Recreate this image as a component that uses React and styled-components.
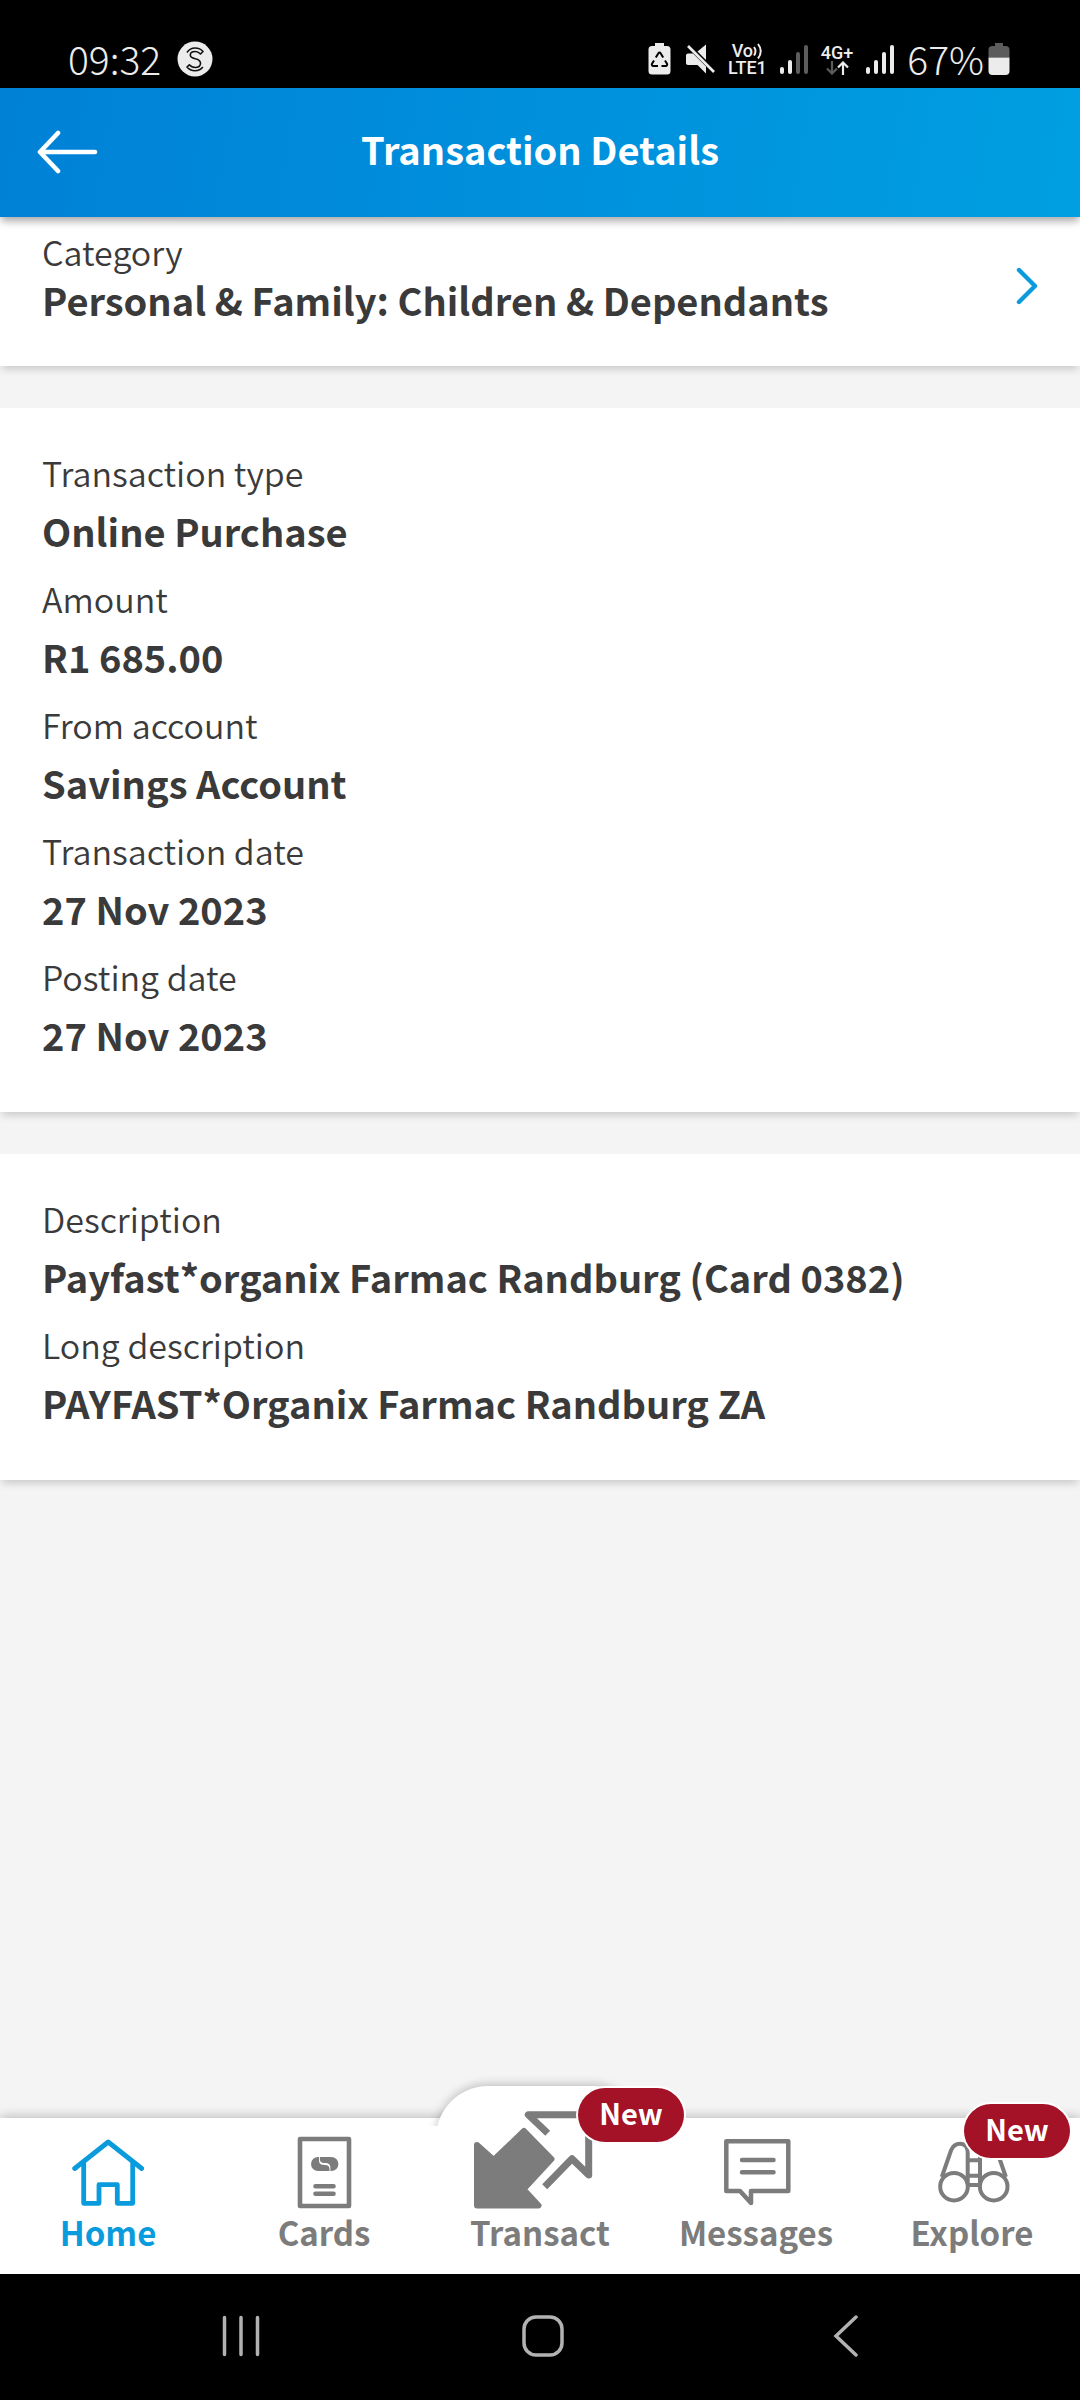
import * as React from "react";
// Components
import styled, { createGlobalStyle, css } from "styled-components";

const colors = {
    blue: "#0a9bdc",
    grey: "#7c7c7c",
    text: "#3a3a3a",
    page: "#f4f4f4",
    badge: "#a31227",
    status: "#ececec",
};

const transaction = [
    { label: "Transaction type", value: "Online Purchase" },
    { label: "Amount", value: "R1 685.00" },
    { label: "From account", value: "Savings Account" },
    { label: "Transaction date", value: "27 Nov 2023" },
    { label: "Posting date", value: "27 Nov 2023" },
];

const description = [
    { label: "Description", value: "Payfast*organix Farmac Randburg (Card 0382)" },
    { label: "Long description", value: "PAYFAST*Organix Farmac Randburg ZA" },
];

// Status bar icons
const AppBadgeIcon = () => (
    <svg width="36" height="36" viewBox="0 0 36 36" fill="none" aria-hidden="true">
        <circle cx="18" cy="18" r="17.5" fill={colors.status} />
        <g stroke="#111" strokeWidth="1.6" strokeLinejoin="round">
            <path d="M10 11.5C12 8.5 15 7 18 7c3 0 6 1 8 3.500l-2.500 2.500C22 11.400 20.300 10.500 18.200 10.500c-3 0-4.900 1.500-4.900 3.500 0 2.200 1.800 3 4.900 3.700 3.200.700 5.300 1.900 5.300 4.600 0 2.700-2.300 4.200-5.300 4.200-2.600 0-4.400-.900-5.900-2.700L10 26c2 2.500 4.700 3.700 8 3.700 3.200 0 6-1.200 7.800-3.700" />
        </g>
    </svg>
);

const SaverIcon = () => (
    <svg width="24" height="34" viewBox="0 0 24 34" fill="none" aria-hidden="true">
        <path d="M7 1h9v3h3a3.500 3.500 0 0 1 3.500 3.500v21.500a3.500 3.500 0 0 1-3.500 3.500H4A3.500 3.500 0 0 1 .5 29V7.500A3.500 3.500 0 0 1 4 4h3z" fill={colors.status} />
        <g stroke="#000" strokeWidth="2" strokeLinejoin="round">
            <path d="M7.800 15.500l2.600-4.300c.6-.9 1.700-.9 2.200 0l2.600 4.300" />
            <path d="M17 18.500l2 3.300c.5 1-.1 2.200-1.300 2.200H13.500" />
            <path d="M10 24H5.300c-1.200 0-1.800-1.200-1.300-2.200l2-3.300" />
        </g>
    </svg>
);

const MuteIcon = () => (
    <svg width="32" height="32" viewBox="0 0 32 32" aria-hidden="true">
        <path d="M22 1.500v15.500l-8.500-8.500z" fill={colors.status} />
        <path d="M2 12.500c0-1 .8-2 2-2h5L22 23.500V30.500L13.500 22H4c-1.200 0-2-.9-2-2z" fill={colors.status} />
        <path d="M4 3l26 26" stroke={colors.status} strokeWidth="2.600" />
    </svg>
);

const WavesIcon = () => (
    <svg width="10" height="16" viewBox="0 0 10 16" fill="none" stroke={colors.status} strokeWidth="2" aria-hidden="true">
        <path d="M1 4q3 4 0 8.500" />
        <path d="M5 1q5.500 7 0 14.500" />
    </svg>
);

const ArrowsIcon = () => (
    <svg width="24" height="14" viewBox="0 0 24 14" fill="none" strokeWidth="2.200" aria-hidden="true">
        <path d="M7 0v12M2 7.500l5 5 5-5" stroke="#5c5c5c" />
        <path d="M18 14V2M13 6.500l5-5 5 5" stroke={colors.status} />
    </svg>
);

const SignalIcon = ({ level }) => (
    <svg width="30" height="32" viewBox="0 0 30 32" strokeWidth="4" strokeLinecap="round" aria-hidden="true">
        {[26, 19, 11, 4].map((top, i) => (
            <path key={top} d={`M${3 + i * 8} ${top}V29`} stroke={i < level ? colors.status : "#5c5c5c"} />
        ))}
    </svg>
);

const BatteryIcon = () => (
    <svg width="22" height="34" viewBox="0 0 22 34" aria-hidden="true">
        <path d="M7 1h8v3h2.500a4 4 0 0 1 4 4v7.500H.5V8a4 4 0 0 1 4-4H7z" fill="#5c5c5c" />
        <path d="M.5 15.500h21V29a4 4 0 0 1-4 4h-13a4 4 0 0 1-4-4z" fill={colors.status} />
    </svg>
);

// Page icons
const BackIcon = () => (
    <svg width="62" height="44" viewBox="0 0 62 44" fill="none" stroke="#fff" strokeWidth="4.600" strokeLinecap="round" strokeLinejoin="round" aria-hidden="true">
        <path d="M59 22H4M22 3L4 22l18 19" />
    </svg>
);

const ChevronIcon = () => (
    <svg width="22" height="38" viewBox="0 0 22 38" fill="none" stroke={colors.blue} strokeWidth="4.400" strokeLinecap="round" strokeLinejoin="round" aria-hidden="true">
        <path d="M3 3l16 16L3 35" />
    </svg>
);

// Tab icons
const HomeIcon = () => (
    <svg width="72" height="76" viewBox="0 0 72 76" fill="none" stroke="currentColor" strokeWidth="4.800" strokeLinecap="round" strokeLinejoin="round" aria-hidden="true">
        <path d="M2.700 34.500L36.200 8l33.500 26.500" />
        <path d="M11.700 28v41.300H27V50.700h18.300v18.600h15.400V28" />
    </svg>
);

const CardsIcon = () => {
    const half = "M30 23a7 7 0 0 0 0 14h11.500v-2c0-3-1.500-3.800-5-4-4-.2-5.500-1.500-5.500-5v-3z";
    return (
        <svg width="72" height="76" viewBox="0 0 72 76" fill="none" stroke="currentColor" strokeWidth="4.600" strokeLinecap="round" strokeLinejoin="round" aria-hidden="true">
            <path d="M12 5h49v67H12z" />
            <path d="M27.500 52.300h18M27.500 59.700h18" />
            <g fill="currentColor" stroke="none">
                <path d={half} />
                <path d={half} transform="rotate(180 36.700 30)" />
            </g>
        </svg>
    );
};

const TransactIcon = () => (
    <svg width="134" height="100" viewBox="0 0 134 100" fill="none" stroke="currentColor" strokeLinejoin="round" aria-hidden="true">
        <path d="M4 35l16.700 15L51 21l27.500 28-28 30.300 15 16.200H4z" fill="currentColor" strokeWidth="6" />
        <path d="M74.700 23.300L55.300 4.700h60.400V65L99 48.700l-27.300 28" strokeWidth="7" />
    </svg>
);

const MessagesIcon = () => (
    <svg width="72" height="76" viewBox="0 0 72 76" fill="none" stroke="currentColor" strokeWidth="4.500" strokeLinecap="round" strokeLinejoin="round" aria-hidden="true">
        <path d="M6.300 7.300h62V57H31v12L20 57H6.300z" />
        <path d="M22 26h31.500M22 38.300h31.500" />
    </svg>
);

const ExploreIcon = () => {
    const barrel = "M5.800 43l9.200-26.500c2-5 5-6.800 9-6.800 5 0 7.700 3.500 7.700 9V50";
    return (
        <svg width="72" height="76" viewBox="0 0 72 76" fill="none" stroke="currentColor" strokeWidth="4" overflow="visible" aria-hidden="true">
            <circle cx="18" cy="52.700" r="13.800" />
            <circle cx="57.700" cy="52.700" r="13.800" />
            <path d={barrel} />
            <path d={barrel} transform="translate(75.700 0) scale(-1 1)" />
            <path d="M31.700 26.300H44M31.700 41.700H44M31 51h13.700" />
        </svg>
    );
};

const tabs = [
    { name: "Home", icon: HomeIcon, active: true },
    { name: "Cards", icon: CardsIcon },
    { name: "Transact", icon: TransactIcon, badge: "raised" },
    { name: "Messages", icon: MessagesIcon },
    { name: "Explore", icon: ExploreIcon, badge: "inner" },
];

const Details = ({ items }) => (
    <StyledDetails>
        {items.map(({ label, value }) => (
            <div key={label}>
                <Label as="dt">{label}</Label>
                <Value as="dd">{value}</Value>
            </div>
        ))}
    </StyledDetails>
);

const App = () => {
    return (
        <StyledApp>
            <GlobalStyle />
            <StatusBar>
                <StatusGroup $gap={16}>
                    <StatusText>09:32</StatusText>
                    <AppBadgeIcon />
                </StatusGroup>
                <StatusGroup $gap={12}>
                    <SaverIcon />
                    <MuteIcon />
                    <Network>
                        <span>Vo<WavesIcon /></span>
                        <span>LTE1</span>
                    </Network>
                    <SignalIcon level={2} />
                    <Network>
                        <span>4G+</span>
                        <ArrowsIcon />
                    </Network>
                    <SignalIcon level={4} />
                    <StatusGroup $gap={4}>
                        <StatusText>67%</StatusText>
                        <BatteryIcon />
                    </StatusGroup>
                </StatusGroup>
            </StatusBar>

            <Header>
                <BackButton type="button" aria-label="Back"><BackIcon /></BackButton>
                <h1>Transaction Details</h1>
            </Header>

            <Content>
                <Category type="button">
                    <span>
                        <Label $compact>Category</Label>
                        <Value $compact>Personal &amp; Family: Children &amp; Dependants</Value>
                    </span>
                    <ChevronIcon />
                </Category>
                <Details items={transaction} />
                <Details items={description} />
            </Content>

            <TabBar>
                {tabs.map(({ name, icon: Icon, active, badge }) => (
                    <Tab key={name} href={`#${name.toLowerCase()}`} $active={active} $raised={badge === "raised"}>
                        <Icon />
                        <span>{name}</span>
                        {badge && <Badge $raised={badge === "raised"}>New</Badge>}
                    </Tab>
                ))}
            </TabBar>

            <SystemBar>
                <button type="button" aria-label="Recents">
                    <svg width="44" height="44" viewBox="0 0 44 44" aria-hidden="true">
                        <path d="M5.500 2.500v37M22 2.500v37M38.500 2.500v37" />
                    </svg>
                </button>
                <button type="button" aria-label="Home screen">
                    <svg width="44" height="44" viewBox="0 0 44 44" aria-hidden="true">
                        <rect x="3" y="2" width="38" height="38" rx="12" />
                    </svg>
                </button>
                <button type="button" aria-label="Previous">
                    <svg width="44" height="44" viewBox="0 0 44 44" aria-hidden="true">
                        <path d="M33 2L13 21l20 19" />
                    </svg>
                </button>
            </SystemBar>
        </StyledApp>
    );
};

const GlobalStyle = createGlobalStyle`
* {
    box-sizing: border-box;
}

body {
    margin: 0;
    background: ${colors.page};
    color: ${colors.text};
    font-family: "Noto Sans CJK SC", "Noto Sans", sans-serif;
}

button {
    padding: 0;
    border: 0;
    background: none;
    color: inherit;
    font: inherit;
    text-align: left;
}

svg {
    display: block;
    flex: none;
}
`;

const StyledApp = styled.div`
display: flex;
flex-direction: column;
min-height: 100vh;
`;

const StatusBar = styled.div`
display: flex;
justify-content: space-between;
height: 88px;
padding: 30px 70px 0 68px;
background: #000;
color: ${colors.status};
`;

const StatusGroup = styled.div`
display: flex;
align-items: center;
gap: ${({ $gap }) => $gap}px;
`;

const StatusText = styled.span`
padding-bottom: 2px;
font-size: 39px;
font-weight: 300;
line-height: 52px;
`;

const Network = styled.span`
display: flex;
flex-direction: column;
align-items: center;
font-family: Roboto, sans-serif;
font-size: 18px;
font-weight: 500;
line-height: 17px;

span {
    display: flex;
    align-items: center;
}
`;

const Header = styled.header`
position: relative;
z-index: 1;
display: grid;
grid-template-columns: 1fr auto 1fr;
align-items: center;
height: 129px;
padding: 0 36px 2px;
background: linear-gradient(100deg, #0081d6, #009fe2);
box-shadow: 0 5px 8px -1px rgba(0, 0, 0, .35);
color: #fff;

h1 {
    margin: 0;
    padding-bottom: 6px;
    font-size: 38px;
    font-weight: 700;
    line-height: 50px;
}
`;

const BackButton = styled.button`
justify-self: start;
`;

const Content = styled.main`
display: flex;
flex: 1;
flex-direction: column;
gap: 42px;
`;

const panel = css`
background: #fff;
box-shadow: 0 5px 8px -2px rgba(0, 0, 0, .18);
`;

const Label = styled.span`
display: block;
font-size: 34px;
font-weight: 350;
line-height: ${({ $compact }) => ($compact ? 48 : 54)}px;
`;

const Value = styled.span`
display: block;
margin: 0;
font-size: 38px;
font-weight: 700;
line-height: ${({ $compact }) => ($compact ? 48 : 62)}px;
`;

const Category = styled.button`
${panel}
display: flex;
align-items: center;
justify-content: space-between;
padding: 11px 42px 42px;

svg {
    margin-top: 20px;
}
`;

const StyledDetails = styled.dl`
${panel}
display: flex;
flex-direction: column;
gap: 10px;
margin: 0;
padding: 38px 42px 46px;
`;

const TabBar = styled.nav`
position: relative;
display: grid;
grid-template-columns: repeat(5, 1fr);
grid-template-rows: 100%;
height: 156px;
background: #fff;
box-shadow: 0 -2px 10px rgba(0, 0, 0, .22);
`;

const Tab = styled.a`
position: relative;
display: flex;
flex-direction: column;
align-items: center;
justify-content: flex-end;
gap: 2px;
min-width: 0;
padding-bottom: 22px;
color: ${({ $active }) => ($active ? colors.blue : colors.grey)};
font-size: 33px;
font-weight: 700;
line-height: 40px;
text-decoration: none;

svg {
    position: relative;
}

${({ $raised }) => $raised && css`
z-index: 1;

&::before {
    content: "";
    position: absolute;
    inset: -32px 4px auto;
    height: 60px;
    border-radius: 52px 52px 0 0;
    background: #fff;
    box-shadow: 0 -2px 10px rgba(0, 0, 0, .22);
    clip-path: inset(-20px -20px 20px -20px);
}
`}
`;

// Sits over the corner of a tab, higher on the raised one
const Badge = styled.span`
position: absolute;
top: ${({ $raised }) => ($raised ? -30 : -14)}px;
right: ${({ $raised }) => ($raised ? -36 : 10)}px;
width: 106px;
height: 54px;
border-radius: 27px;
background: ${colors.badge};
box-shadow: 0 0 0 2px #fff;
color: #fff;
font-size: 29px;
line-height: 48px;
text-align: center;
`;

const SystemBar = styled.div`
display: grid;
grid-template-columns: repeat(3, 1fr);
align-items: center;
justify-items: center;
height: 126px;
padding: 0 84px 0 90px;
background: #000;

svg {
    fill: none;
    stroke: #b2b2b2;
    stroke-width: 3.5;
    stroke-linecap: round;
}
`;

export default App;
